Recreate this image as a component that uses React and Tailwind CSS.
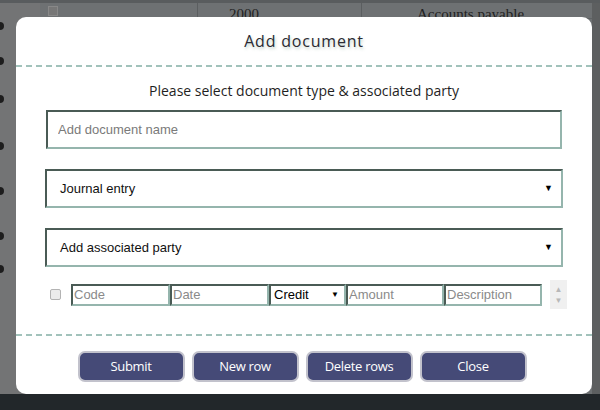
import React from 'react';

const fieldBorder =
  'border-2 border-t-[#4a5b55] border-l-[#4a5b55] border-b-[#95b5ad] border-r-[#95b5ad]';

const Dashed = () => (
  <div className="h-[2px] w-full bg-[repeating-linear-gradient(90deg,#a2c2bb_0_6px,transparent_6px_10px)]" />
);

const BigSelect = ({ label }) => (
  <div className={`mx-[29px] flex h-[39px] items-center justify-between bg-white pl-[13px] pr-[8px] ${fieldBorder}`}>
    <span className="text-[13px] text-[#111]">{label}</span>
    <span className="text-[9px] text-black">▼</span>
  </div>
);

const SmallInput = ({ placeholder, width }) => (
  <input
    placeholder={placeholder}
    className={`h-[22px] ${width} bg-white px-[1px] text-[13px] text-black placeholder:text-[#8a8a8a] outline-none ${fieldBorder}`}
  />
);

const Background = () => (
  <div className="flex h-[410px] w-[600px] flex-col bg-[#6e7173]">
    <div className="h-[3px] bg-[#595c5e]" />
    <div className="flex flex-1">
      {/* left edge with radio dots */}
      <div className="flex w-[40px] flex-col bg-[#737475]">
        {[27, 35, 38, 47, 45, 45, 33].map((h, i) => (
          <div key={i} className="relative" style={{ height: h }}>
            <div className="absolute -left-[4px] bottom-0 h-[8px] w-[8px] rounded-full bg-[#1d1d1d]" />
          </div>
        ))}
      </div>
      <div className="flex flex-1 flex-col">
        <div className="flex h-[16px] border-b border-[#5f6264] font-['Liberation_Serif',serif] text-[15px] leading-[20px] text-[#222]">
          <div className="flex w-[158px] items-start border-r border-[#5b5e60] pl-[8px] pt-[3px]">
            <div className="h-[10px] w-[10px] border border-[#888] bg-[#777]" />
          </div>
          <div className="w-[164px] border-r border-[#5b5e60] pl-[31px] pt-[1px]">2000</div>
          <div className="flex-1 pl-[55px] pt-[1px]">Accounts payable</div>
        </div>
      </div>
      <div className="w-[8px] bg-[#5d5f60]" />
    </div>
    <div className="h-[16px] bg-[#22272a]" />
  </div>
);

export default function App() {
  return (
    <div className="relative h-[410px] w-[600px] overflow-hidden font-['Liberation_Sans',Arial,sans-serif]">
      <Background />

      <div className="absolute left-[16px] top-[17px] flex h-[377px] w-[576px] flex-col rounded-[10px] bg-white">
        <div className="flex h-[48px] items-center justify-center">
          <h1 className="font-['Open_Sans',sans-serif] text-[16px] tracking-[0.8px] text-[#2b2b33] [text-shadow:1px_2px_3px_rgba(120,160,140,0.45)]">
            Add document
          </h1>
        </div>
        <Dashed />

        <p className="mt-[14px] text-center font-['Open_Sans',sans-serif] text-[14px] leading-[20px] text-[#1f1f1f]">
          Please select document type &amp; associated party
        </p>

        <div className="mt-[9px] mx-[30px]">
          <input
            placeholder="Add document name"
            className={`h-[39px] w-full bg-white px-[10px] text-[13px] text-black placeholder:text-[#7a7a7a] outline-none ${fieldBorder}`}
          />
        </div>

        <div className="mt-[20px]">
          <BigSelect label="Journal entry" />
        </div>
        <div className="mt-[20px]">
          <BigSelect label="Add associated party" />
        </div>

        <div className="mt-[13px] flex items-center pl-[34px]">
          <div className="mr-[10px] h-[11px] w-[11px] rounded-[2px] border border-[#b3b3b3] bg-[#ececec]" />
          <SmallInput placeholder="Code" width="w-[99px]" />
          <SmallInput placeholder="Date" width="w-[99px]" />
          <div className={`flex h-[22px] w-[77px] items-center justify-between bg-white pl-[3px] pr-[5px] ${fieldBorder}`}>
            <span className="text-[13px] text-black">Credit</span>
            <span className="text-[8px] text-black">▼</span>
          </div>
          <SmallInput placeholder="Amount" width="w-[98px]" />
          <SmallInput placeholder="Description" width="w-[98px]" />
          <div className="ml-[8px] flex h-[29px] w-[17px] flex-col items-center justify-center bg-[#f0f0f0] text-[8px] leading-[11px] text-[#b8b8b8]">
            <span>▲</span>
            <span>▼</span>
          </div>
        </div>

        <div className="mt-[25px]">
          <Dashed />
        </div>

        <div className="mt-[15px] flex justify-center gap-[7px] pr-[4px]">
          {['Submit', 'New row', 'Delete rows', 'Close'].map((b) => (
            <button
              key={b}
              className="h-[31px] w-[107px] rounded-[7px] border-2 border-[#c2c2cc] bg-[#454a77] font-['Open_Sans',sans-serif] text-[13px] tracking-[-0.3px] text-white"
            >
              {b}
            </button>
          ))}
        </div>
      </div>
    </div>
  );
}
